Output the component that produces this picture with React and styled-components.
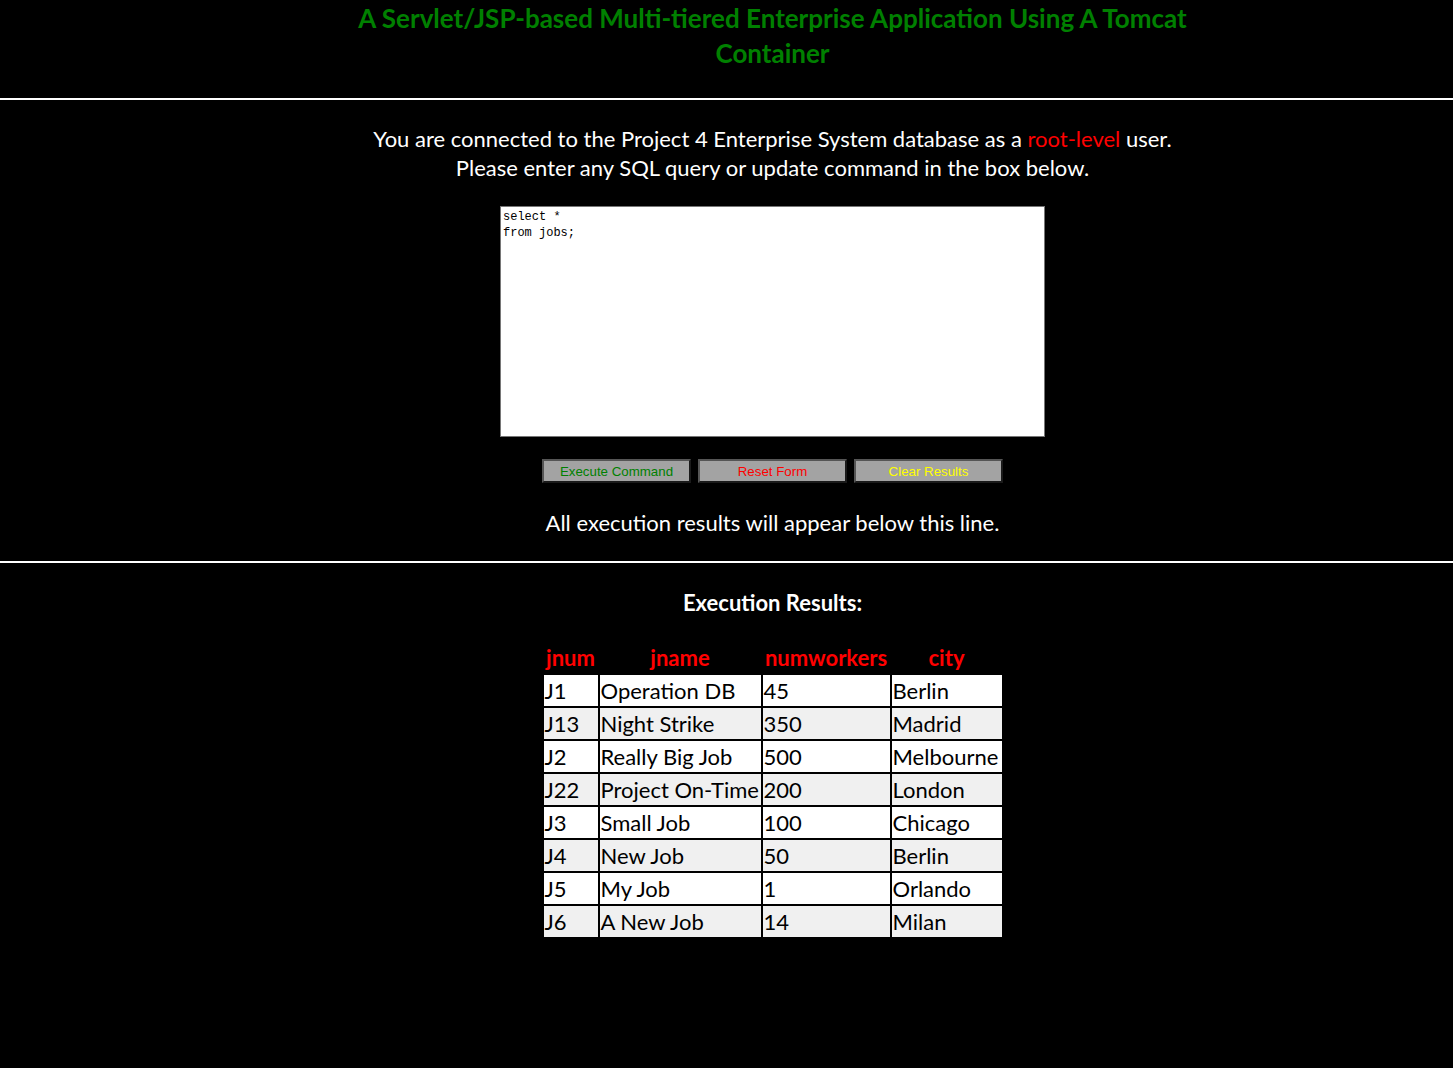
import React from "react";
import styled, { createGlobalStyle } from "styled-components";

const rows = [
  ["J1", "Operation DB", "45", "Berlin"],
  ["J13", "Night Strike", "350", "Madrid"],
  ["J2", "Really Big Job", "500", "Melbourne"],
  ["J22", "Project On-Time", "200", "London"],
  ["J3", "Small Job", "100", "Chicago"],
  ["J4", "New Job", "50", "Berlin"],
  ["J5", "My Job", "1", "Orlando"],
  ["J6", "A New Job", "14", "Milan"],
];

const columns = [
  { name: "jnum", width: 54 },
  { name: "jname", width: 161 },
  { name: "numworkers", width: 127 },
  { name: "city", width: 110 },
];

export default function App() {
  return (
    <Page>
      <GlobalStyle />
      <Section>
        <Title>
          A Servlet/JSP-based Multi-tiered Enterprise Application Using A Tomcat
          <br />
          Container
        </Title>
      </Section>
      <Divider $top={27} />
      <Section>
        <Message $top={24}>
          You are connected to the Project 4 Enterprise System database as a{" "}
          <Red>root-level</Red> user.
          <br />
          Please enter any SQL query or update command in the box below.
        </Message>
        <Query defaultValue={"select *\nfrom jobs;"} />
        <Buttons>
          <Button $color="#008000">Execute Command</Button>
          <Button $color="#ff0000">Reset Form</Button>
          <Button $color="#ffff00">Clear Results</Button>
        </Buttons>
        <Message $top={25}>All execution results will appear below this line.</Message>
      </Section>
      <Divider $top={24} />
      <Section>
        <ResultsTitle>Execution Results:</ResultsTitle>
        <Table>
          <thead>
            <tr>
              {columns.map((c) => (
                <Head key={c.name} $width={c.width}>
                  {c.name}
                </Head>
              ))}
            </tr>
          </thead>
          <tbody>
            {rows.map((r, i) => (
              <Row key={r[0]} $odd={i % 2 === 1}>
                {r.map((v, j) => (
                  <Cell key={j}>{v}</Cell>
                ))}
              </Row>
            ))}
          </tbody>
        </Table>
      </Section>
    </Page>
  );
}

const GlobalStyle = createGlobalStyle`
  html, body {
    margin: 0;
    background: #000;
  }
  body {
    font-family: Lato, "Open Sans", sans-serif;
    color: #fff;
  }
`;

const Page = styled.div`
  min-height: 1068px;
  background: #000;
  overflow: hidden;
`;

const Section = styled.div`
  display: flex;
  flex-direction: column;
  align-items: center;
  padding-left: 92px;
  text-align: center;
`;

const Title = styled.h1`
  margin: 1px 0 0;
  color: #008000;
  font-size: 26px;
  line-height: 35px;
  font-weight: 700;
`;

const Divider = styled.div`
  height: 2px;
  background: #fff;
  margin-top: ${(p) => p.$top}px;
`;

const Message = styled.p`
  margin: ${(p) => p.$top}px 0 0;
  font-size: 22px;
  line-height: 29px;
`;

const Red = styled.span`
  color: #ff0000;
`;

const Query = styled.textarea`
  box-sizing: border-box;
  width: 545px;
  height: 231px;
  margin-top: 24px;
  padding: 2px 2px;
  border: 1px solid #767676;
  background: #fff;
  color: #000;
  font-family: "Liberation Mono", monospace;
  font-size: 12px;
  line-height: 16px;
  resize: none;
  outline: none;
`;

const Buttons = styled.div`
  display: flex;
  gap: 7px;
  margin-top: 22px;
`;

const Button = styled.button`
  box-sizing: border-box;
  width: 149px;
  height: 24px;
  padding: 0;
  background: #a3a3a3;
  border-style: solid;
  border-width: 2px;
  border-color: #555 #1a1a1a #1a1a1a #555;
  color: ${(p) => p.$color};
  font-family: "Liberation Sans", Arial, sans-serif;
  font-size: 13.3px;
`;

const ResultsTitle = styled.h3`
  margin: 25px 0 0;
  font-size: 22px;
  line-height: 29px;
  font-weight: 700;
`;

const Table = styled.table`
  margin-top: 23px;
  border-collapse: separate;
  border-spacing: 2px;
  background: #000;
  font-size: 22px;
  table-layout: fixed;
`;

const Head = styled.th`
  width: ${(p) => p.$width}px;
  height: 31px;
  padding: 0;
  color: #ff0000;
  font-weight: 700;
  text-align: center;
  white-space: nowrap;
`;

const Row = styled.tr`
  background: ${(p) => (p.$odd ? "#f0f0f0" : "#fff")};
`;

const Cell = styled.td`
  height: 31px;
  padding: 0 0 0 1px;
  color: #000;
  text-align: left;
  white-space: nowrap;
`;
